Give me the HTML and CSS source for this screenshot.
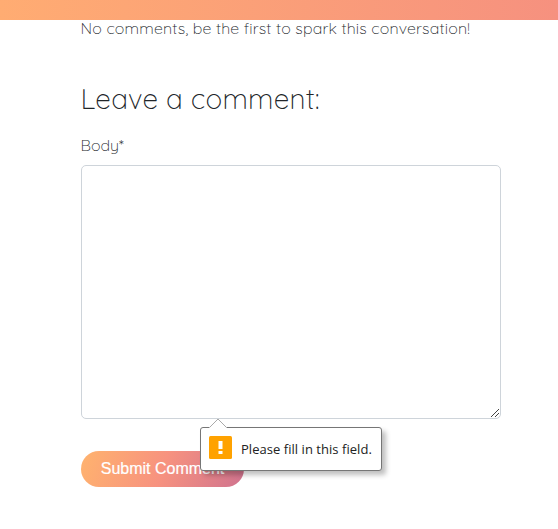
FILE: index.html
```html
<!DOCTYPE html>
<html lang="en">
<head>
<meta charset="utf-8">
<title>Leave a comment</title>
<link rel="stylesheet" href="styles.css">
</head>
<body>
<header class="banner"></header>
<main class="comments">
  <p class="empty">No comments, be the first to spark this conversation!</p>
  <h2 class="title">Leave a comment:</h2>
  <form class="form">
    <label class="label" for="body">Body*</label>
    <div class="field">
      <textarea class="body" id="body"></textarea>
      <svg class="grip" width="10" height="10" viewBox="0 0 10 10"><path d="M1 9L9 1M5 9L9 5" stroke="#444" fill="none"/></svg>
    </div>
    <div class="actions">
      <button class="submit" type="button">Submit Comment</button>
      <div class="tip" role="alert">
        <svg class="tip-arrow" width="18" height="10" viewBox="0 0 18 10"><path d="M0 10L1 9L9 1L17 9L18 10Z" fill="#fff"/><path d="M1 9L9 1L17 9" fill="none" stroke="#aaa"/></svg>
        <svg class="tip-icon" width="23" height="23" viewBox="0 0 23 23"><rect width="23" height="23" rx="1.5" fill="#ffa200"/><path d="M9.5 5h4v8h-4zM9.5 15h4v3h-4z" fill="#fff"/></svg>
        <span class="tip-text">Please fill in this field.</span>
      </div>
    </div>
  </form>
</main>
</body>
</html>
```
FILE: styles.css
```css
* { box-sizing: border-box; }
body {
  margin: 0;
  height: 529px;
  overflow: hidden;
  background: #fff;
  color: #212529;
  font-family: Quicksand, Inter, sans-serif;
  font-weight: 300;
  font-feature-settings: "cv11";
}
.banner {
  height: 20px;
  background: linear-gradient(90deg, #ffac72, #f6917f);
}
.comments { width: 420px; margin-left: 81px; }
.empty, .title, .label { position: relative; left: -0.5px; white-space: nowrap; }
.empty { margin: 0; font-size: 16px; line-height: 24px; margin-top: -4px; letter-spacing: 0.15px; }
.title { margin: 42px 0 0; font-size: 28px; line-height: 34px; font-weight: 300; letter-spacing: 0.22px; }
.label { display: block; margin-top: 17px; height: 32px; font-size: 16px; line-height: 24px; }
.field { position: relative; height: 254px; }
.body {
  display: block;
  width: 420px;
  height: 254px;
  border: 1px solid #ced4da;
  border-radius: 5px;
  resize: none;
  outline: 0;
}
.grip { position: absolute; right: 1px; bottom: 1px; }
.actions { position: relative; margin-top: 32px; }
.submit {
  display: block;
  width: 163px;
  height: 36px;
  padding: 0;
  border: 0;
  border-radius: 18px;
  background: linear-gradient(110deg, #ffb36e, #f7927f 50%, #d0738f);
  color: #fff;
  font: 16px/34px "Liberation Sans", Arial, sans-serif;
  -webkit-text-stroke: 0.2px #fff;
}
.tip {
  position: absolute;
  left: 119px;
  top: -24px;
  display: flex;
  align-items: center;
  width: 182px;
  height: 44px;
  padding: 0 8px;
  gap: 9px;
  background: #fff;
  border: 1px solid #767676;
  border-radius: 3px;
  box-shadow: 4px 4px 5px rgba(0, 0, 0, .25);
}
.tip-arrow { position: absolute; left: 8px; top: -10px; }
.tip-icon { flex: none; margin-top: -3px; }
.tip-text { font: 13px/20px "Open Sans", "Noto Sans", sans-serif; color: #222; white-space: nowrap; letter-spacing: 0.04px; }
```
